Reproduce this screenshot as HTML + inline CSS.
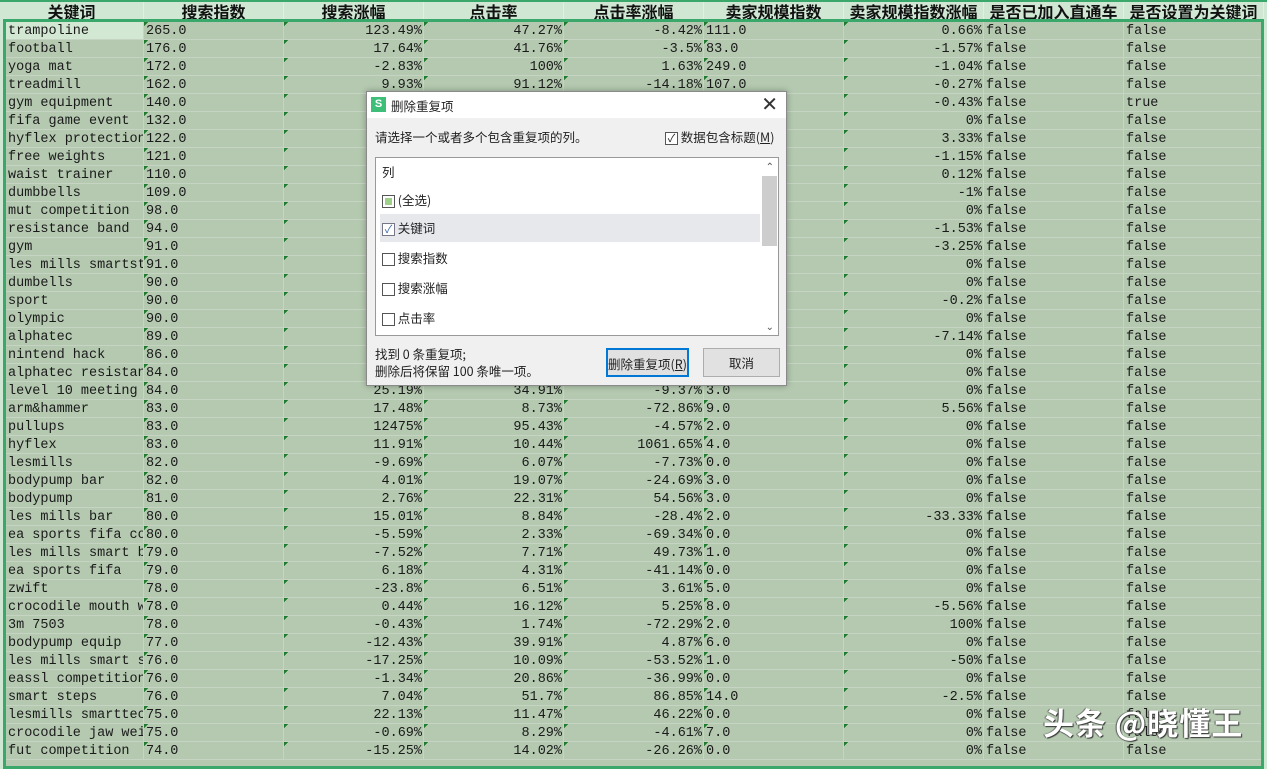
<!DOCTYPE html><html><head><meta charset="utf-8"><style>
*{box-sizing:border-box;margin:0;padding:0}
body{width:1267px;height:759px;overflow:hidden;background:#cfe7d3;position:relative;font-family:"Liberation Mono","Noto Sans CJK SC",monospace;color:#1a1a1a}
.hd{position:absolute;left:0;top:0;width:1267px;height:20px;border-top:2px solid #3aa86a;background:#cfe7d3;display:grid;grid-template-columns:144px repeat(9,140px)}
.hd div{font:bold 16px "Noto Sans CJK SC",sans-serif;text-align:center;line-height:18px;border-right:1px solid #e2efe4;color:#111}
.body{position:absolute;left:3px;top:19px;width:1261px;height:750px;border:3px solid #3aa86a;background:#b4c9b0;overflow:hidden}
.r{display:grid;grid-template-columns:138px repeat(8,140px);height:18px}
.r div{font-size:13.5px;line-height:19px;height:18px;border-right:1px solid #c6d5c3;border-bottom:1px solid #c6d5c3;padding:0 1px 0 2px;white-space:nowrap;overflow:hidden}
.r div.n{text-align:right}
.r div.t{background:linear-gradient(135deg,#1e7a2c 3px,transparent 3px)}
.r:first-child div:first-child{background:#d3e8d3}
.dlg{position:absolute;left:366px;top:91px;width:421px;height:295px;background:#f0f0f0;border:1px solid #8a8a8a;box-shadow:0 0 6px rgba(0,0,0,.3);font-family:"Noto Sans CJK SC",sans-serif;font-size:12.5px;color:#222}
.ttl{height:26px;background:#fff;position:relative}
.ic{position:absolute;left:4px;top:5px;width:15px;height:15px;background:#3dbf7a;color:#fff;font:bold 11px "Liberation Sans",sans-serif;text-align:center;line-height:15px}
.cb{display:inline-block;width:13px;height:13px;border:1px solid #555;background:#fff;vertical-align:middle;position:relative}
.list{position:absolute;left:8px;top:65px;width:404px;height:179px;border:1px solid #999;background:#fff}
.it{position:absolute;left:4px;height:28px;line-height:28px;width:380px;padding-left:2px}
.btn{position:absolute;height:29px;line-height:27px;text-align:center;border:1px solid #adadad;background:#e1e1e1}
</style></head><body>
<div class="hd"><div>关键词</div><div>搜索指数</div><div>搜索涨幅</div><div>点击率</div><div>点击率涨幅</div><div>卖家规模指数</div><div>卖家规模指数涨幅</div><div>是否已加入直通车</div><div>是否设置为关键词</div><div></div></div>
<div class="body">
<div class="r"><div>trampoline</div><div class="t">265.0</div><div class="n t">123.49%</div><div class="n t">47.27%</div><div class="n t">-8.42%</div><div class="t">111.0</div><div class="n t">0.66%</div><div>false</div><div>false</div></div>
<div class="r"><div>football</div><div class="t">176.0</div><div class="n t">17.64%</div><div class="n t">41.76%</div><div class="n t">-3.5%</div><div class="t">83.0</div><div class="n t">-1.57%</div><div>false</div><div>false</div></div>
<div class="r"><div>yoga mat</div><div class="t">172.0</div><div class="n t">-2.83%</div><div class="n t">100%</div><div class="n t">1.63%</div><div class="t">249.0</div><div class="n t">-1.04%</div><div>false</div><div>false</div></div>
<div class="r"><div>treadmill</div><div class="t">162.0</div><div class="n t">9.93%</div><div class="n t">91.12%</div><div class="n t">-14.18%</div><div class="t">107.0</div><div class="n t">-0.27%</div><div>false</div><div>false</div></div>
<div class="r"><div>gym equipment</div><div class="t">140.0</div><div class="n t"></div><div class="n t"></div><div class="n t"></div><div class="t"></div><div class="n t">-0.43%</div><div>false</div><div>true</div></div>
<div class="r"><div>fifa game event</div><div class="t">132.0</div><div class="n t"></div><div class="n t"></div><div class="n t"></div><div class="t"></div><div class="n t">0%</div><div>false</div><div>false</div></div>
<div class="r"><div>hyflex protection</div><div class="t">122.0</div><div class="n t"></div><div class="n t"></div><div class="n t"></div><div class="t"></div><div class="n t">3.33%</div><div>false</div><div>false</div></div>
<div class="r"><div>free weights</div><div class="t">121.0</div><div class="n t"></div><div class="n t"></div><div class="n t"></div><div class="t"></div><div class="n t">-1.15%</div><div>false</div><div>false</div></div>
<div class="r"><div>waist trainer</div><div class="t">110.0</div><div class="n t"></div><div class="n t"></div><div class="n t"></div><div class="t"></div><div class="n t">0.12%</div><div>false</div><div>false</div></div>
<div class="r"><div>dumbbells</div><div class="t">109.0</div><div class="n t"></div><div class="n t"></div><div class="n t"></div><div class="t"></div><div class="n t">-1%</div><div>false</div><div>false</div></div>
<div class="r"><div>mut competition</div><div class="t">98.0</div><div class="n t"></div><div class="n t"></div><div class="n t"></div><div class="t"></div><div class="n t">0%</div><div>false</div><div>false</div></div>
<div class="r"><div>resistance band</div><div class="t">94.0</div><div class="n t"></div><div class="n t"></div><div class="n t"></div><div class="t"></div><div class="n t">-1.53%</div><div>false</div><div>false</div></div>
<div class="r"><div>gym</div><div class="t">91.0</div><div class="n t"></div><div class="n t"></div><div class="n t"></div><div class="t"></div><div class="n t">-3.25%</div><div>false</div><div>false</div></div>
<div class="r"><div>les mills smartst</div><div class="t">91.0</div><div class="n t"></div><div class="n t"></div><div class="n t"></div><div class="t"></div><div class="n t">0%</div><div>false</div><div>false</div></div>
<div class="r"><div>dumbells</div><div class="t">90.0</div><div class="n t"></div><div class="n t"></div><div class="n t"></div><div class="t"></div><div class="n t">0%</div><div>false</div><div>false</div></div>
<div class="r"><div>sport</div><div class="t">90.0</div><div class="n t"></div><div class="n t"></div><div class="n t"></div><div class="t"></div><div class="n t">-0.2%</div><div>false</div><div>false</div></div>
<div class="r"><div>olympic</div><div class="t">90.0</div><div class="n t"></div><div class="n t"></div><div class="n t"></div><div class="t"></div><div class="n t">0%</div><div>false</div><div>false</div></div>
<div class="r"><div>alphatec</div><div class="t">89.0</div><div class="n t"></div><div class="n t"></div><div class="n t"></div><div class="t"></div><div class="n t">-7.14%</div><div>false</div><div>false</div></div>
<div class="r"><div>nintend hack</div><div class="t">86.0</div><div class="n t"></div><div class="n t"></div><div class="n t"></div><div class="t"></div><div class="n t">0%</div><div>false</div><div>false</div></div>
<div class="r"><div>alphatec resistan</div><div class="t">84.0</div><div class="n t"></div><div class="n t"></div><div class="n t"></div><div class="t"></div><div class="n t">0%</div><div>false</div><div>false</div></div>
<div class="r"><div>level 10 meeting</div><div class="t">84.0</div><div class="n t">25.19%</div><div class="n t">34.91%</div><div class="n t">-9.37%</div><div class="t">3.0</div><div class="n t">0%</div><div>false</div><div>false</div></div>
<div class="r"><div>arm&amp;hammer</div><div class="t">83.0</div><div class="n t">17.48%</div><div class="n t">8.73%</div><div class="n t">-72.86%</div><div class="t">9.0</div><div class="n t">5.56%</div><div>false</div><div>false</div></div>
<div class="r"><div>pullups</div><div class="t">83.0</div><div class="n t">12475%</div><div class="n t">95.43%</div><div class="n t">-4.57%</div><div class="t">2.0</div><div class="n t">0%</div><div>false</div><div>false</div></div>
<div class="r"><div>hyflex</div><div class="t">83.0</div><div class="n t">11.91%</div><div class="n t">10.44%</div><div class="n t">1061.65%</div><div class="t">4.0</div><div class="n t">0%</div><div>false</div><div>false</div></div>
<div class="r"><div>lesmills</div><div class="t">82.0</div><div class="n t">-9.69%</div><div class="n t">6.07%</div><div class="n t">-7.73%</div><div class="t">0.0</div><div class="n t">0%</div><div>false</div><div>false</div></div>
<div class="r"><div>bodypump bar</div><div class="t">82.0</div><div class="n t">4.01%</div><div class="n t">19.07%</div><div class="n t">-24.69%</div><div class="t">3.0</div><div class="n t">0%</div><div>false</div><div>false</div></div>
<div class="r"><div>bodypump</div><div class="t">81.0</div><div class="n t">2.76%</div><div class="n t">22.31%</div><div class="n t">54.56%</div><div class="t">3.0</div><div class="n t">0%</div><div>false</div><div>false</div></div>
<div class="r"><div>les mills bar</div><div class="t">80.0</div><div class="n t">15.01%</div><div class="n t">8.84%</div><div class="n t">-28.4%</div><div class="t">2.0</div><div class="n t">-33.33%</div><div>false</div><div>false</div></div>
<div class="r"><div>ea sports fifa co</div><div class="t">80.0</div><div class="n t">-5.59%</div><div class="n t">2.33%</div><div class="n t">-69.34%</div><div class="t">0.0</div><div class="n t">0%</div><div>false</div><div>false</div></div>
<div class="r"><div>les mills smart b</div><div class="t">79.0</div><div class="n t">-7.52%</div><div class="n t">7.71%</div><div class="n t">49.73%</div><div class="t">1.0</div><div class="n t">0%</div><div>false</div><div>false</div></div>
<div class="r"><div>ea sports fifa</div><div class="t">79.0</div><div class="n t">6.18%</div><div class="n t">4.31%</div><div class="n t">-41.14%</div><div class="t">0.0</div><div class="n t">0%</div><div>false</div><div>false</div></div>
<div class="r"><div>zwift</div><div class="t">78.0</div><div class="n t">-23.8%</div><div class="n t">6.51%</div><div class="n t">3.61%</div><div class="t">5.0</div><div class="n t">0%</div><div>false</div><div>false</div></div>
<div class="r"><div>crocodile mouth w</div><div class="t">78.0</div><div class="n t">0.44%</div><div class="n t">16.12%</div><div class="n t">5.25%</div><div class="t">8.0</div><div class="n t">-5.56%</div><div>false</div><div>false</div></div>
<div class="r"><div>3m 7503</div><div class="t">78.0</div><div class="n t">-0.43%</div><div class="n t">1.74%</div><div class="n t">-72.29%</div><div class="t">2.0</div><div class="n t">100%</div><div>false</div><div>false</div></div>
<div class="r"><div>bodypump equip</div><div class="t">77.0</div><div class="n t">-12.43%</div><div class="n t">39.91%</div><div class="n t">4.87%</div><div class="t">6.0</div><div class="n t">0%</div><div>false</div><div>false</div></div>
<div class="r"><div>les mills smart s</div><div class="t">76.0</div><div class="n t">-17.25%</div><div class="n t">10.09%</div><div class="n t">-53.52%</div><div class="t">1.0</div><div class="n t">-50%</div><div>false</div><div>false</div></div>
<div class="r"><div>eassl competition</div><div class="t">76.0</div><div class="n t">-1.34%</div><div class="n t">20.86%</div><div class="n t">-36.99%</div><div class="t">0.0</div><div class="n t">0%</div><div>false</div><div>false</div></div>
<div class="r"><div>smart steps</div><div class="t">76.0</div><div class="n t">7.04%</div><div class="n t">51.7%</div><div class="n t">86.85%</div><div class="t">14.0</div><div class="n t">-2.5%</div><div>false</div><div>false</div></div>
<div class="r"><div>lesmills smarttec</div><div class="t">75.0</div><div class="n t">22.13%</div><div class="n t">11.47%</div><div class="n t">46.22%</div><div class="t">0.0</div><div class="n t">0%</div><div>false</div><div>false</div></div>
<div class="r"><div>crocodile jaw wei</div><div class="t">75.0</div><div class="n t">-0.69%</div><div class="n t">8.29%</div><div class="n t">-4.61%</div><div class="t">7.0</div><div class="n t">0%</div><div>false</div><div>false</div></div>
<div class="r"><div>fut competition</div><div class="t">74.0</div><div class="n t">-15.25%</div><div class="n t">14.02%</div><div class="n t">-26.26%</div><div class="t">0.0</div><div class="n t">0%</div><div>false</div><div>false</div></div>
</div>
<div style="position:absolute;left:1043px;top:699px;font:bold 31px 'Noto Sans CJK SC',sans-serif;color:#fff;text-shadow:1px 1px 1px #333,-1px 0 1px #555;letter-spacing:1px">头条 @晓懂王</div>
<div class="dlg">
<div class="ttl"><div class="ic">S</div><span style="position:absolute;left:24px;top:4px">删除重复项</span><span style="position:absolute;right:8px;top:0;font:20px 'Liberation Sans',sans-serif;color:#333">✕</span></div>
<div style="position:absolute;left:8px;top:35px">请选择一个或者多个包含重复项的列。</div>
<div style="position:absolute;left:298px;top:35px"><span class="cb" style="font-size:11px;line-height:10px;text-align:center">✓</span> 数据包含标题(<u>M</u>)</div>
<div class="list">
<div class="it" style="top:0">列</div>
<div class="it" style="top:28px"><span class="cb"><span style="position:absolute;left:2px;top:2px;width:7px;height:7px;background:#9fd08a"></span></span> (全选)</div>
<div class="it" style="top:56px;background:#e6e8ec"><span class="cb" style="border-color:#778;font-size:11px;line-height:10px;text-align:center;color:#3a6ab0">✓</span> 关键词</div>
<div class="it" style="top:86px"><span class="cb"></span> 搜索指数</div>
<div class="it" style="top:116px"><span class="cb"></span> 搜索涨幅</div>
<div class="it" style="top:146px"><span class="cb"></span> 点击率</div>
<div style="position:absolute;right:1px;top:18px;width:15px;height:70px;background:#cdcdcd"></div>
<div style="position:absolute;right:4px;top:0;font-size:10px;color:#555">⌃</div>
<div style="position:absolute;right:4px;bottom:2px;font-size:10px;color:#555">⌄</div>
</div>
<div style="position:absolute;left:8px;top:253px;line-height:17px">找到 0 条重复项;<br>删除后将保留 100 条唯一项。</div>
<div class="btn" style="left:239px;top:256px;width:83px;border:2px solid #0078d7">删除重复项(<u>R</u>)</div>
<div class="btn" style="left:336px;top:256px;width:77px">取消</div>
</div>
</body></html>
